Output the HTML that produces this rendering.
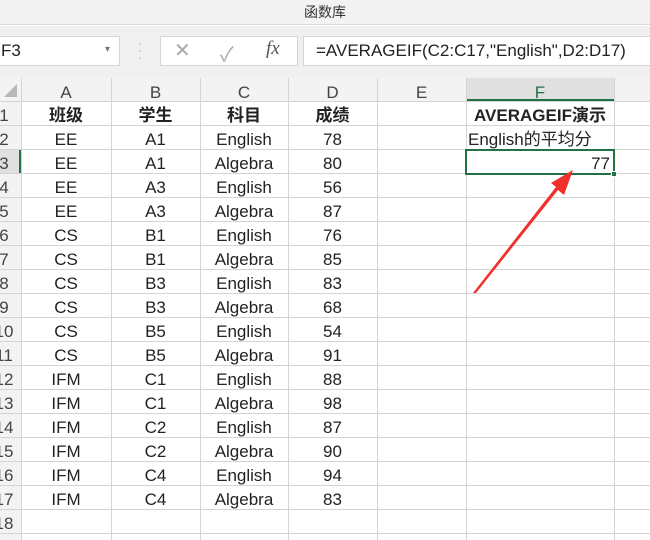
<!DOCTYPE html>
<html><head><meta charset="utf-8"><style>
*{margin:0;padding:0;box-sizing:border-box}
body{width:650px;height:540px;overflow:hidden;background:#fff;position:relative;font-family:"Liberation Sans","Noto Sans CJK SC",sans-serif;color:#222}
.a{position:absolute}
.c{position:absolute;height:24px;line-height:24px;padding-top:3px;font-size:17px;text-align:center;white-space:nowrap;overflow:hidden}
.vl{position:absolute;top:78px;width:1px;height:462px;background:#d4d4d4}
.hl{position:absolute;left:0;height:1px;width:650px;background:#d4d4d4}
.ch{position:absolute;top:78px;height:23px;line-height:23px;padding-top:3px;font-size:17px;text-align:center;color:#444}
.rh{position:absolute;left:-16px;width:40px;text-align:center;font-size:17px;color:#444;height:24px;line-height:24px;padding-top:3px}
</style></head><body>
<div class="a" style="left:0;top:0;width:650px;height:25px;background:#f3f3f3;border-bottom:1px solid #d8d8d8;text-align:center;font-size:14px;line-height:24px;color:#333">函数库</div>
<div class="a" style="left:0;top:26px;width:650px;height:52px;background:#f0f0f0"></div>
<div class="a" style="left:-2px;top:36px;width:122px;height:30px;background:#fff;border:1px solid #d6d6d6;font-size:17px;line-height:28px;padding-left:2px">F3</div>
<div class="a" style="left:105px;top:44px;font-size:10px;color:#777">▾</div>
<div class="a" style="left:138px;top:40px;font-size:14px;color:#bbb;line-height:7px">·<br>·<br>·</div>
<div class="a" style="left:160px;top:36px;width:138px;height:30px;background:#fff;border:1px solid #d6d6d6"></div>
<div class="a" style="left:174px;top:38px;font-size:20px;color:#aaa">✕</div>
<div class="a" style="left:220px;top:38px;font-size:20px;color:#aaa">✓</div>
<div class="a" style="left:266px;top:38px;font-size:19px;color:#555;font-family:'Liberation Serif',serif;font-style:italic">fx</div>
<div class="a" style="left:303px;top:36px;width:350px;height:30px;background:#fff;border:1px solid #d6d6d6;font-size:17px;line-height:28px;padding-left:12px">=AVERAGEIF(C2:C17,"English",D2:D17)</div>
<div class="a" style="left:0;top:78px;width:650px;height:23px;background:#f3f3f3"></div>
<div class="a" style="left:0;top:78px;width:21px;height:462px;background:#f3f3f3"></div>
<div class="a" style="left:466px;top:78px;width:148px;height:23px;background:#e0e0e0;border-bottom:2px solid #217346"></div>
<div class="a" style="left:0;top:149px;width:21px;height:24px;background:#e0e0e0;border-right:2px solid #217346"></div>
<div class="a" style="left:4px;top:84px;width:0;height:0;border-left:13px solid transparent;border-bottom:13px solid #b8b8b8"></div>
<div class="ch" style="left:21px;width:90px">A</div>
<div class="ch" style="left:111px;width:89px">B</div>
<div class="ch" style="left:200px;width:88px">C</div>
<div class="ch" style="left:288px;width:89px">D</div>
<div class="ch" style="left:377px;width:89px">E</div>
<div class="ch" style="left:466px;width:148px;color:#217346">F</div>
<div class="vl" style="left:21px"></div><div class="vl" style="left:111px"></div><div class="vl" style="left:200px"></div><div class="vl" style="left:288px"></div><div class="vl" style="left:377px"></div><div class="vl" style="left:466px"></div><div class="vl" style="left:614px"></div>
<div class="hl" style="top:101px"></div><div class="hl" style="top:125px"></div><div class="hl" style="top:149px"></div><div class="hl" style="top:173px"></div><div class="hl" style="top:197px"></div><div class="hl" style="top:221px"></div><div class="hl" style="top:245px"></div><div class="hl" style="top:269px"></div><div class="hl" style="top:293px"></div><div class="hl" style="top:317px"></div><div class="hl" style="top:341px"></div><div class="hl" style="top:365px"></div><div class="hl" style="top:389px"></div><div class="hl" style="top:413px"></div><div class="hl" style="top:437px"></div><div class="hl" style="top:461px"></div><div class="hl" style="top:485px"></div><div class="hl" style="top:509px"></div><div class="hl" style="top:533px"></div>
<div id="g"></div>
<script>
var d=[["班级","学生","科目","成绩"],["EE","A1","English","78"],["EE","A1","Algebra","80"],["EE","A3","English","56"],["EE","A3","Algebra","87"],["CS","B1","English","76"],["CS","B1","Algebra","85"],["CS","B3","English","83"],["CS","B3","Algebra","68"],["CS","B5","English","54"],["CS","B5","Algebra","91"],["IFM","C1","English","88"],["IFM","C1","Algebra","98"],["IFM","C2","English","87"],["IFM","C2","Algebra","90"],["IFM","C4","English","94"],["IFM","C4","Algebra","83"]];
var L=[21,111,200,288],W=[90,89,88,89],h="";
for(var r=0;r<18;r++){var t=101+r*24;h+='<div class="rh" style="top:'+t+'px">'+(r+1)+'</div>';
if(r<17){for(var c=0;c<4;c++){h+='<div class="c" style="left:'+L[c]+'px;width:'+W[c]+'px;top:'+t+'px;'+(r==0?'font-weight:bold;':'')+'">'+d[r][c]+'</div>';}}}
document.getElementById('g').innerHTML=h;
</script>
<div class="c" style="left:466px;width:148px;top:101px;font-weight:bold">AVERAGEIF演示</div>
<div class="c" style="left:468px;width:160px;top:125px;text-align:left">English的平均分</div>
<div class="a" style="left:465px;top:149px;width:150px;height:26px;border:2px solid #217346"></div>
<div class="c" style="left:466px;width:144px;top:149px;text-align:right">77</div>
<div class="a" style="left:611px;top:171px;width:6px;height:6px;background:#217346;border:1px solid #fff"></div>
<svg class="a" style="left:0;top:0" width="650" height="540"><polygon points="473,293 476,293 558,190 564,195 573,170 551,183 556,187" fill="#f0302a"/></svg>
</body></html>
